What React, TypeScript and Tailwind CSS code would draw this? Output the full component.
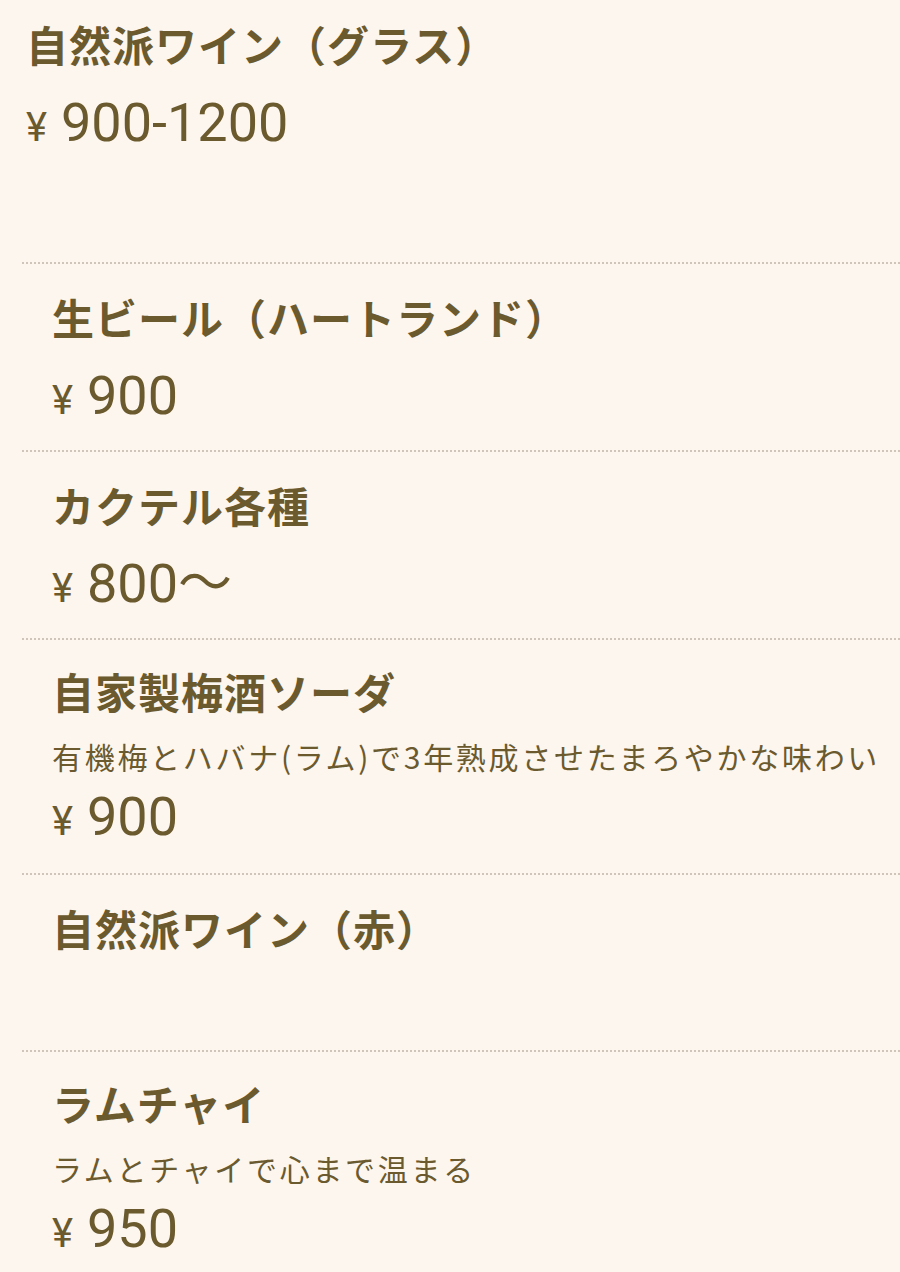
import React from 'react';

type Item = {
  name: string;
  desc?: string;
  price?: string;
  first?: boolean;
};

const items: Item[] = [
  { name: '自然派ワイン（グラス）', price: '900-1200', first: true },
  { name: '生ビール（ハートランド）', price: '900' },
  { name: 'カクテル各種', price: '800〜' },
  { name: '自家製梅酒ソーダ', desc: '有機梅とハバナ(ラム)で3年熟成させたまろやかな味わい', price: '900' },
  { name: '自然派ワイン（赤）' },
  { name: 'ラムチャイ', desc: 'ラムとチャイで心まで温まる', price: '950' },
];

const jp = { fontFamily: '"Noto Sans CJK JP", sans-serif' };
const num = { fontFamily: 'Roboto, "Noto Sans CJK JP", sans-serif' };

const MenuRow: React.FC<{ item: Item }> = ({ item }) => {
  let pad = 'pl-[30px] pt-[25px] pb-[23px]';
  if (item.first) pad = 'pl-[4px] pt-[16px] pb-[108px]';
  if (item.desc) pad = 'pl-[30px] pt-[23px] pb-[25px]';
  if (!item.price) pad = 'pl-[30px] pt-[25px] pb-[24px]';

  return (
    <div className={'border-b-2 border-dotted border-[#cfc5b8] ' + pad}>
      <h3 className="text-[42px] leading-[56px] font-bold text-[#6b5a2e] tracking-[1px]" style={jp}>
        {item.name}
      </h3>
      {item.desc && (
        <p className="text-[30px] leading-[44px] text-[#6b5a2e] tracking-[2.7px] mt-[15px] whitespace-nowrap" style={jp}>
          {item.desc}
        </p>
      )}
      {item.price ? (
        <p
          className={'text-[54px] leading-[62px] text-[#6b5a2e] ' + (item.desc ? 'mt-[8px]' : 'mt-[20px]')}
          style={num}
        >
          <span className="text-[40px] leading-none mr-[14px]">¥</span>
          {item.price}
        </p>
      ) : (
        <div className="h-[70px]" />
      )}
    </div>
  );
};

export default function App() {
  return (
    <div className="min-h-[1272px] bg-[#fdf6ef] pl-[22px] overflow-hidden">
      {items.map((it, i) => (
        <MenuRow key={i} item={it} />
      ))}
    </div>
  );
}
